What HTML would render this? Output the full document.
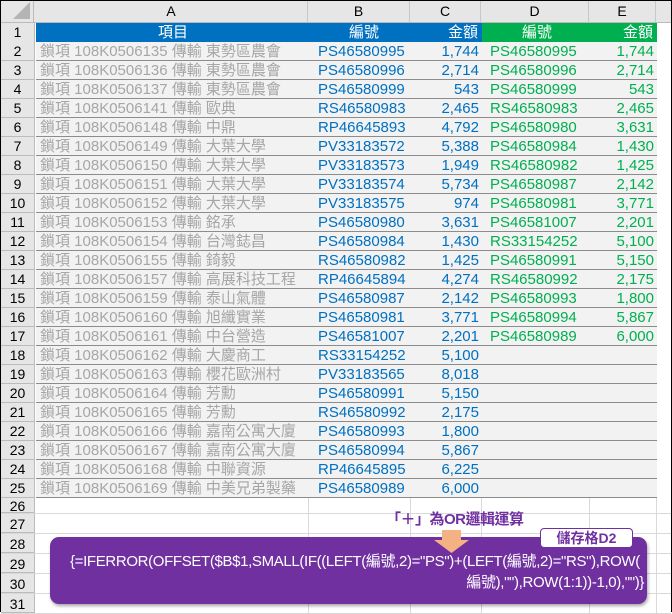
<!DOCTYPE html>
<html><head><meta charset="utf-8"><style>
*{margin:0;padding:0;box-sizing:border-box}
body{width:672px;height:612px;overflow:hidden;background:#fff;font-family:"Liberation Sans","Noto Sans CJK TC",sans-serif;position:relative}
.frame{position:absolute;left:0;top:0;width:672px;height:612px;border:1px solid #000;border-bottom:none}
.r{position:absolute;left:1px;height:19px;font-size:15px;line-height:19px;white-space:nowrap}
.rh{position:absolute;left:0;width:34px;text-align:center;color:#000;background:#e6e6e6;border-right:1px solid #bbb;height:100%;font-size:14px}
.c{position:absolute;top:0;height:100%}
.a{left:35px;width:273px;color:#a6a6a6;padding-left:4px}
.b{left:308px;width:102px;color:#0070c0;padding-left:9px}
.cc{left:410px;width:71px;color:#0070c0;text-align:right;padding-right:3px}
.d{left:481px;width:108px;color:#00b050;padding-left:8px}
.e{left:589px;width:67px;color:#00b050;text-align:right;padding-right:3px}
.data{background:#f2f2f2;border-bottom:1px solid #8c8c8c}
</style></head><body>
<div style="position:absolute;left:0;top:0;width:672px;height:23px;background:#e6e6e6;border-bottom:1px solid #bbb;font-size:14px;line-height:22px;color:#000">
<div style="position:absolute;left:0;width:34px;height:22px;border-right:1px solid #bbb"><div style="position:absolute;right:3px;bottom:3px;width:0;height:0;border-left:17px solid transparent;border-bottom:17px solid #b4b4b4"></div></div>
<div style="position:absolute;left:35px;width:273px;text-align:center;border-right:1px solid #c8c8c8">A</div>
<div style="position:absolute;left:308px;width:102px;text-align:center;border-right:1px solid #c8c8c8">B</div>
<div style="position:absolute;left:410px;width:71px;text-align:center;border-right:1px solid #c8c8c8">C</div>
<div style="position:absolute;left:481px;width:108px;text-align:center;border-right:1px solid #c8c8c8">D</div>
<div style="position:absolute;left:589px;width:67px;text-align:center;border-right:1px solid #c8c8c8">E</div>
</div>
<div id="rows"></div>
<div class="frame"></div>
<script>
const A=["鎖項 108K0506135 傳輸 東勢區農會","鎖項 108K0506136 傳輸 東勢區農會","鎖項 108K0506137 傳輸 東勢區農會","鎖項 108K0506141 傳輸 歐典","鎖項 108K0506148 傳輸 中鼎","鎖項 108K0506149 傳輸 大葉大學","鎖項 108K0506150 傳輸 大葉大學","鎖項 108K0506151 傳輸 大葉大學","鎖項 108K0506152 傳輸 大葉大學","鎖項 108K0506153 傳輸 銘承","鎖項 108K0506154 傳輸 台灣鋕昌","鎖項 108K0506155 傳輸 錡毅","鎖項 108K0506157 傳輸 高展科技工程","鎖項 108K0506159 傳輸 泰山氣體","鎖項 108K0506160 傳輸 旭纖實業","鎖項 108K0506161 傳輸 中台營造","鎖項 108K0506162 傳輸 大慶商工","鎖項 108K0506163 傳輸 櫻花歐洲村","鎖項 108K0506164 傳輸 芳勳","鎖項 108K0506165 傳輸 芳勳","鎖項 108K0506166 傳輸 嘉南公寓大廈","鎖項 108K0506167 傳輸 嘉南公寓大廈","鎖項 108K0506168 傳輸 中聯資源","鎖項 108K0506169 傳輸 中美兄弟製藥"];
const B=["PS46580995","PS46580996","PS46580999","RS46580983","RP46645893","PV33183572","PV33183573","PV33183574","PV33183575","PS46580980","PS46580984","RS46580982","RP46645894","PS46580987","PS46580981","PS46581007","RS33154252","PV33183565","PS46580991","RS46580992","PS46580993","PS46580994","RP46645895","PS46580989"];
const C=["1,744","2,714","543","2,465","4,792","5,388","1,949","5,734","974","3,631","1,430","1,425","4,274","2,142","3,771","2,201","5,100","8,018","5,150","2,175","1,800","5,867","6,225","6,000"];
const D=["PS46580995","PS46580996","PS46580999","RS46580983","PS46580980","PS46580984","RS46580982","PS46580987","PS46580981","PS46581007","RS33154252","PS46580991","RS46580992","PS46580993","PS46580994","PS46580989"];
const E=["1,744","2,714","543","2,465","3,631","1,430","1,425","2,142","3,771","2,201","5,100","5,150","2,175","1,800","5,867","6,000"];
let h='';
h+='<div class="r" style="top:23px;width:670px"><div class="rh">1</div><div class="c" style="left:35px;width:446px;background:#0070c0;color:#fff"><span style="position:absolute;left:122px">項目</span><span style="position:absolute;left:313px">編號</span><span style="position:absolute;right:4px">金額</span></div><div class="c" style="left:481px;width:175px;background:#00b050;color:#fff"><span style="position:absolute;left:40px">編號</span><span style="position:absolute;right:4px">金額</span></div></div>';
for(let i=0;i<24;i++){let t=42+i*19;
h+='<div class="r" style="top:'+t+'px;width:670px;height:19px"><div class="rh" style="border-bottom:1px solid #bbb">'+(i+2)+'</div><div class="c data" style="left:35px;width:621px"></div><div class="c a">'+A[i]+'</div><div class="c b">'+B[i]+'</div><div class="c cc">'+C[i]+'</div>'+(i<16?'<div class="c d">'+D[i]+'</div><div class="c e">'+E[i]+'</div>':'')+'</div>';}
const tops=[498,514,534,554,574,594];
for(let j=0;j<6;j++){let t=tops[j],hh=j==0?16:20;
h+='<div class="r" style="top:'+t+'px;width:670px;height:'+hh+'px;line-height:'+hh+'px;border-bottom:1px solid #d9d9d9"><div class="rh" style="border-bottom:1px solid #bbb">'+(26+j)+'</div>'+[308,410,481,589,656].map(x=>'<div class="c" style="left:'+(x-1)+'px;width:1px;background:#d9d9d9"></div>').join('')+'</div>';}
document.getElementById('rows').innerHTML=h;
</script>
<div style="position:absolute;left:386px;top:511px;font-size:15px;font-weight:bold;color:#7030a0;white-space:nowrap;line-height:18px;letter-spacing:-0.5px">「＋」為OR邏輯運算</div>
<div style="position:absolute;left:50px;top:537px;width:597px;height:67px;background:#7030a0;border-radius:9px;box-shadow:1px 2px 3px rgba(0,0,0,.35)"></div>
<svg style="position:absolute;left:434px;top:530px" width="36" height="24"><polygon points="8,0 27,0 27,10 35,10 17.5,23 0,10 8,10" fill="#f4b183"/></svg>
<div style="position:absolute;left:540px;top:528px;width:93px;height:20px;background:#fff;border:1px solid #7030a0;border-radius:4px;color:#7030a0;font-size:14px;font-weight:bold;text-align:center;line-height:18px">儲存格D2</div>
<div style="position:absolute;left:70px;top:551px;width:574px;color:#fff;font-size:15px;line-height:22px;letter-spacing:-0.35px;white-space:nowrap">{=IFERROR(OFFSET($B$1,SMALL(IF((LEFT(編號,2)="PS")+(LEFT(編號,2)="RS"),ROW(</div>
<div style="position:absolute;left:70px;top:572px;width:574px;color:#fff;font-size:15px;line-height:22px;letter-spacing:-0.35px;text-align:right;white-space:nowrap">編號),""),ROW(1:1))-1,0),"")}</div>
</body></html>
